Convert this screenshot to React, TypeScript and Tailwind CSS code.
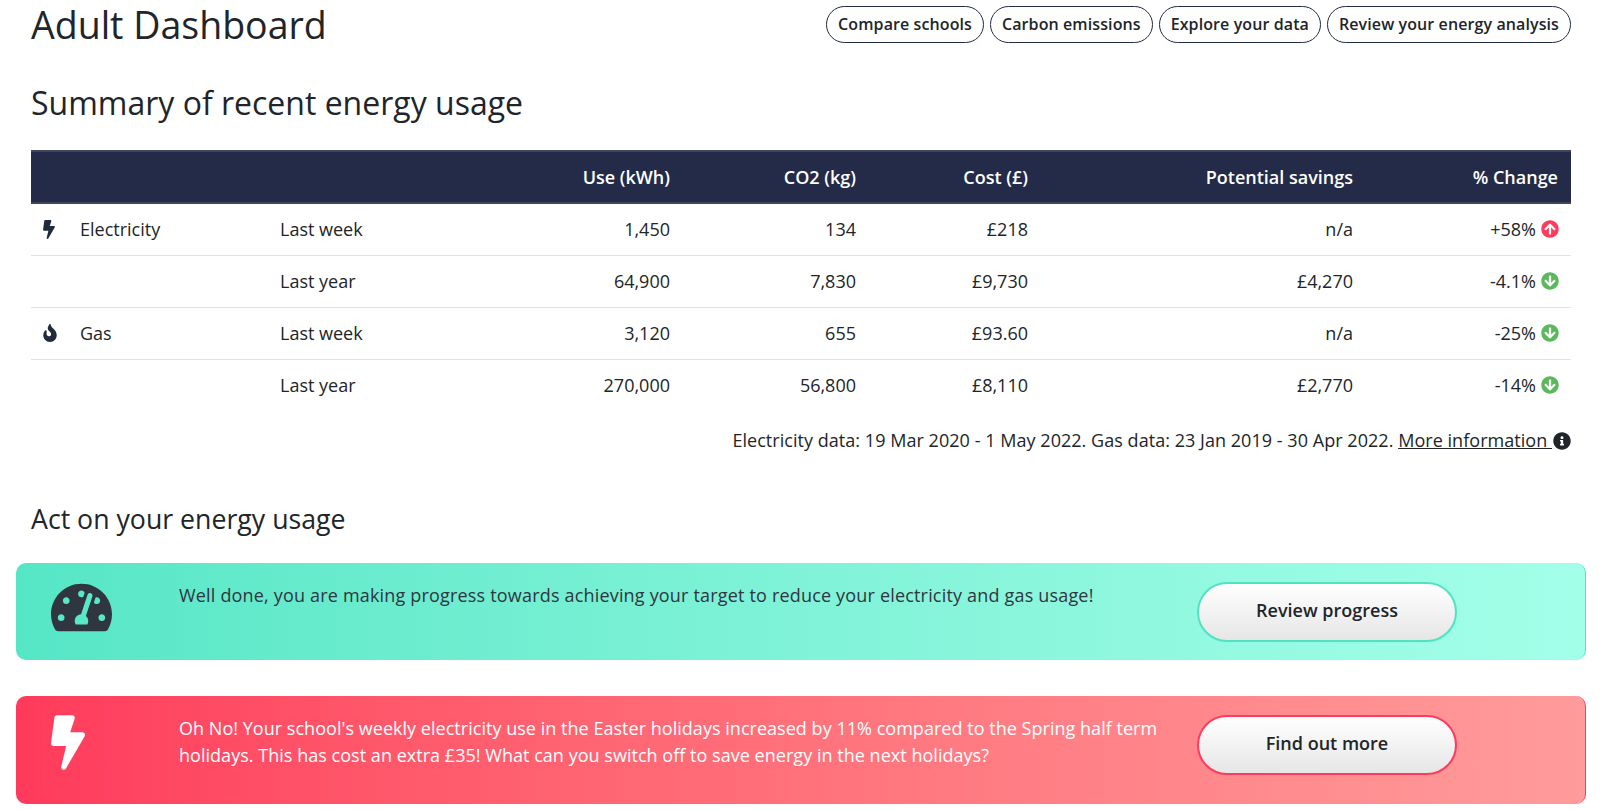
import { FaArrowCircleDown, FaArrowCircleUp, FaBolt, FaFire, FaInfoCircle, FaTachometerAlt } from 'react-icons/fa';

const links = ['Compare schools', 'Carbon emissions', 'Explore your data', 'Review your energy analysis'];

const rows = [
  { icon: 'bolt', fuel: 'Electricity', period: 'Last week', use: '1,450', co2: '134', cost: '£218', savings: 'n/a', change: '+58%', up: true },
  { icon: '', fuel: '', period: 'Last year', use: '64,900', co2: '7,830', cost: '£9,730', savings: '£4,270', change: '-4.1%', up: false },
  { icon: 'fire', fuel: 'Gas', period: 'Last week', use: '3,120', co2: '655', cost: '£93.60', savings: 'n/a', change: '-25%', up: false },
  { icon: '', fuel: '', period: 'Last year', use: '270,000', co2: '56,800', cost: '£8,110', savings: '£2,770', change: '-14%', up: false },
];

export default function App() {
  return (
    <div className="h-[810px] overflow-hidden bg-white pl-[31px] pr-[32px] font-['Open_Sans',sans-serif] text-[#222b45]">
      <div className="flex items-start justify-between">
        <h1 className="text-[37.5px] leading-[49px] text-[#212529]">Adult Dashboard</h1>
        <div className="flex gap-[6px] pt-[6px]">
          {links.map((link) => (
            <a key={link} className="flex h-[37px] items-center rounded-full border border-[#222b45] px-[11px] pb-[2px] text-[16px] font-semibold tracking-[0.1px] text-[#212529]">
              {link}
            </a>
          ))}
        </div>
      </div>

      <h2 className="mt-[34px] text-[32px] leading-[40px] text-[#212529]">Summary of recent energy usage</h2>

      <table className="mt-[27px] w-full table-fixed border-collapse text-[18px] text-[#212529]">
        <thead>
          <tr className="h-[52px] border-y-2 border-y-[#3e465c] bg-[#232b49] text-right text-white">
            <th className="w-[37px]"></th>
            <th className="w-[200px]"></th>
            <th className="w-[200px]"></th>
            <th className="w-[215px] pr-[13px] font-semibold">Use (kWh)</th>
            <th className="w-[186px] pr-[13px] font-semibold">CO2 (kg)</th>
            <th className="w-[172px] pr-[13px] font-semibold">Cost (£)</th>
            <th className="w-[325px] pr-[13px] font-semibold">Potential savings</th>
            <th className="pr-[13px] font-semibold">% Change</th>
          </tr>
        </thead>
        <tbody>
          {rows.map((row, i) => (
            <tr key={i} className="h-[52px] border-b border-[#dee2e6] last:border-b-0">
              <td className="pl-3">
                {row.icon === 'bolt' && <FaBolt className="h-[19px] w-[12px] text-[#212b3a]" />}
                {row.icon === 'fire' && <FaFire className="h-[18px] w-[14px] text-[#212b3a]" />}
              </td>
              <td className="pl-3">{row.fuel}</td>
              <td className="pl-[12px]">{row.period}</td>
              <td className="pr-[13px] text-right">{row.use}</td>
              <td className="pr-[13px] text-right">{row.co2}</td>
              <td className="pr-[13px] text-right">{row.cost}</td>
              <td className="pr-[13px] text-right">{row.savings}</td>
              <td className="pr-[12px]">
                <div className="flex items-center justify-end gap-[5px]">
                  {row.change}
                  {row.up ? (
                    <FaArrowCircleUp className="h-[18px] w-[18px] text-[#ff3a5c]" />
                  ) : (
                    <FaArrowCircleDown className="h-[18px] w-[18px] text-[#5cb85c]" />
                  )}
                </div>
              </td>
            </tr>
          ))}
        </tbody>
      </table>

      <p className="mt-[16px] flex items-center justify-end gap-[1px] text-[18px] leading-[27px] tracking-[0.04px] text-[#212529]">
        <span>
          Electricity data: 19 Mar 2020 - 1 May 2022. Gas data: 23 Jan 2019 - 30 Apr 2022. <a className="underline">More information&nbsp;</a>
        </span>
        <FaInfoCircle className="h-[18px] w-[18px] text-[#212529]" />
      </p>

      <h3 className="mt-[48px] text-[26.7px] leading-[34px] text-[#212529]">Act on your energy usage</h3>

      <div className="-ml-[15px] -mr-[15px] mt-[27px] flex h-[97px] rounded-[10px] border-r border-r-[#50e3c2] bg-gradient-to-r from-[#55e6c6] to-[#a3ffe9]">
        <div className="w-[163px] pl-[35px] pt-[14px]">
          <FaTachometerAlt className="h-[61px] w-[61px] text-[#2f3640]" />
        </div>
        <p className="w-[1018px] pt-[19px] text-[18px] leading-[27px] tracking-[0.18px] text-[#2f3640]">
          Well done, you are making progress towards achieving your target to reduce your electricity and gas usage!
        </p>
        <a className="mt-[19px] flex h-[60px] w-[260px] items-center justify-center rounded-full border-2 border-[#50e3c2] bg-gradient-to-b from-white to-[#e6e6e6] pb-[3px] text-[18px] font-semibold text-[#212529]">
          Review progress
        </a>
      </div>

      <div className="-ml-[15px] -mr-[15px] mt-[36px] flex h-[108px] rounded-[10px] border-r border-r-[#ff3a5c] bg-gradient-to-r from-[#ff3a5c] to-[#ff9b9b]">
        <div className="w-[163px] pl-[35px] pt-[19px]">
          <FaBolt className="h-[55px] w-[34px] text-white" />
        </div>
        <p className="w-[1018px] pr-[14px] pt-[19px] text-[18px] leading-[27px] tracking-[0.03px] text-white">
          Oh No! Your school's weekly electricity use in the Easter holidays increased by 11% compared to the Spring half term holidays. This has cost an extra £35! What can you switch off to save energy in the next holidays?
        </p>
        <a className="mt-[19px] flex h-[60px] w-[260px] items-center justify-center rounded-full border-2 border-[#ff3a5c] bg-gradient-to-b from-white to-[#e6e6e6] pb-[3px] text-[18px] font-semibold text-[#212529]">
          Find out more
        </a>
      </div>
    </div>
  );
}
